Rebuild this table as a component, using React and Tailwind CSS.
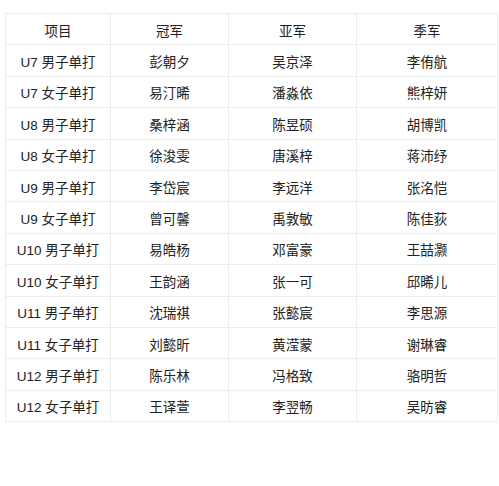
const ROWS = [
  ['U7 男子单打', '彭朝夕', '吴京泽', '李侑航'],
  ['U7 女子单打', '易汀晞', '潘淼依', '熊梓妍'],
  ['U8 男子单打', '桑梓涵', '陈昱硕', '胡博凯'],
  ['U8 女子单打', '徐浚雯', '唐溪梓', '蒋沛纾'],
  ['U9 男子单打', '李岱宸', '李远洋', '张洺恺'],
  ['U9 女子单打', '曾可馨', '禹敦敏', '陈佳荻'],
  ['U10 男子单打', '易皓杨', '邓富豪', '王喆灏'],
  ['U10 女子单打', '王韵涵', '张一可', '邱晞儿'],
  ['U11 男子单打', '沈瑞祺', '张懿宸', '李思源'],
  ['U11 女子单打', '刘懿昕', '黄滢蒙', '谢琳睿'],
  ['U12 男子单打', '陈乐林', '冯格致', '骆明哲'],
  ['U12 女子单打', '王译萱', '李翌畅', '吴昉睿'],
]

const HEAD = ['项目', '冠军', '亚军', '季军']
const WIDTHS = ['w-[105px]', 'w-[118px]', 'w-[128px]', 'w-[141px]']

function Cell({ children, i }) {
  return (
    <td className={`${WIDTHS[i]} h-[31.4px] border border-[#ececec] p-0 pt-[5px] text-center align-middle leading-5`}>
      {children}
    </td>
  )
}

export default function App() {
  return (
    <div className="w-[499px] h-[486px] bg-white pt-[13px] pl-[5px]" style={{ fontFamily: '"Liberation Sans", "Noto Sans CJK SC", sans-serif' }}>
      <table className="border-collapse table-fixed text-[13.5px] text-[#222]">
        <thead>
          <tr>
            {HEAD.map((h, i) => <Cell key={i} i={i}>{h}</Cell>)}
          </tr>
        </thead>
        <tbody>
          {ROWS.map((r, ri) => (
            <tr key={ri}>
              {r.map((c, i) => <Cell key={i} i={i}>{c}</Cell>)}
            </tr>
          ))}
        </tbody>
      </table>
    </div>
  )
}
